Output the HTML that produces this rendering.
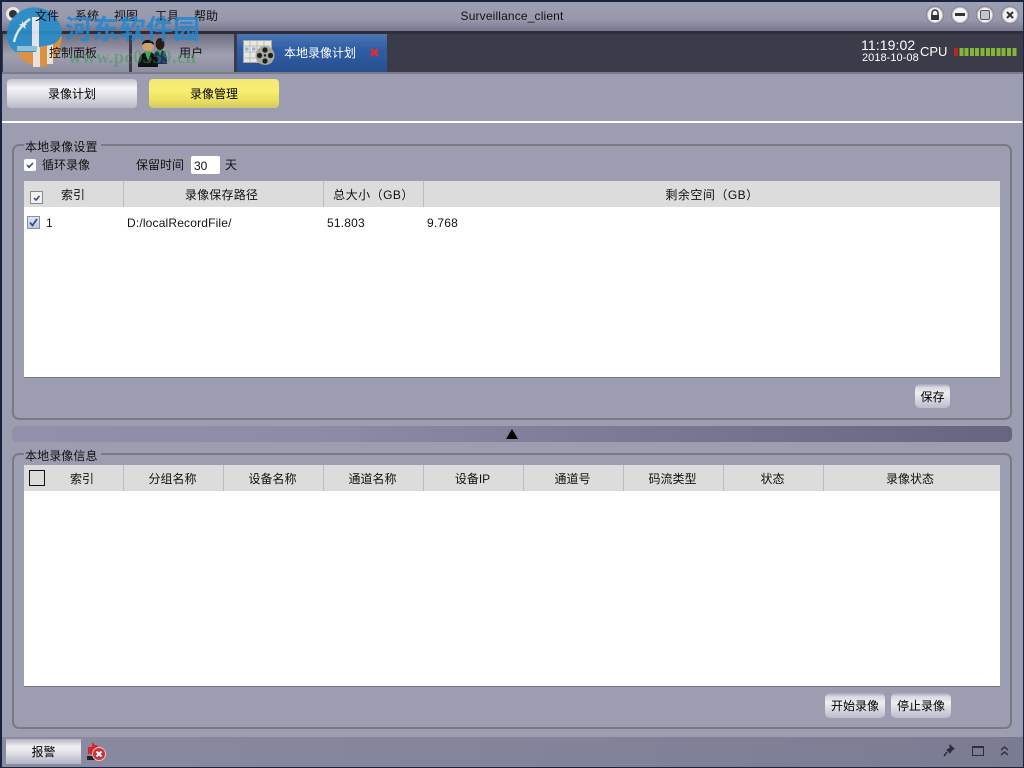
<!DOCTYPE html>
<html><head><meta charset="utf-8">
<style>
html,body{margin:0;padding:0}
body{width:1024px;height:768px;overflow:hidden;position:relative;background:#9d9db1;font-family:"Liberation Sans","Noto Sans CJK SC",sans-serif;font-size:12px;color:#111}
.a{position:absolute}
.t{position:absolute;white-space:nowrap;line-height:16px;height:16px}
.c{text-align:center}
.btn{position:absolute;border-radius:5px;background:linear-gradient(#a4a4b6 0,#d8d8e0 14%,#eeeef2 38%,#bcbccb 100%);text-align:center;color:#000}
.fs{position:absolute;border:2px solid #7a7a84;border-radius:7px;box-sizing:border-box}
.leg{position:absolute;background:#9d9db1;padding:0 3px 0 1px;line-height:16px;height:16px;white-space:nowrap;font-size:12px;letter-spacing:.1px}
.hd{position:absolute;background:#dcdcdc;height:26px}
.sep{position:absolute;width:1px;height:26px;background:#bcbcc0}
.wb{position:absolute;top:6px;width:18px;height:18px;border-radius:50%;background:radial-gradient(#f2f2f5 52%,#666674 72%,#7a7a8a 82%,#a8a8b8 100%)}
</style></head><body>
<!-- outer frame -->
<div class="a" style="left:0;top:0;width:1024px;height:2px;background:#17233f"></div>
<div class="a" style="left:0;top:0;width:2px;height:768px;background:#17233f"></div>
<div class="a" style="right:0;top:0;width:1px;height:768px;background:#17233f"></div>
<!-- title bar -->
<div class="a" style="left:2px;top:2px;width:1021px;height:30px;background:linear-gradient(#9e9eb2 0,#9898ac 60%,#72728a 100%)"></div>
<div class="a" style="left:2px;top:31px;width:1021px;height:3px;background:#2e2e38"></div>
<div class="a" style="left:6px;top:7px;width:14px;height:14px;border-radius:50%;background:#e8e8e8"></div>
<div class="a" style="left:9px;top:10px;width:8px;height:8px;border-radius:50%;background:#333"></div>
<div class="t" style="left:75px;top:8px;color:#111">系统</div>
<div class="t" style="left:114px;top:8px;color:#111">视图</div>
<div class="t" style="left:155px;top:8px;color:#111">工具</div>
<div class="t" style="left:194px;top:8px;color:#111">帮助</div>
<div class="t c" style="left:412px;top:8px;width:200px;color:#111;font-size:12px;letter-spacing:.15px">Surveillance_client</div>
<!-- window buttons -->
<div class="wb" style="left:926px"></div>
<svg class="a" style="left:926px;top:6px" width="18" height="18"><path d="M6 9V7a3 3 0 0 1 6 0v2" fill="none" stroke="#333" stroke-width="1.5"/><rect x="5" y="9" width="8" height="5" fill="#333"/></svg>
<div class="wb" style="left:951px"></div>
<div class="a" style="left:955px;top:13px;width:10px;height:3px;background:#333"></div>
<div class="wb" style="left:976px"></div>
<div class="a" style="left:980px;top:10px;width:10px;height:10px;border:1.5px solid #555;border-radius:2px;box-sizing:border-box;background:#c4c4cc"></div>
<div class="wb" style="left:1001px"></div>
<svg class="a" style="left:1001px;top:6px" width="18" height="18"><path d="M6 6L12 12M12 6L6 12" stroke="#333" stroke-width="2"/></svg>
<!-- tab bar -->
<div class="a" style="left:2px;top:34px;width:1021px;height:38px;background:#3a3a48"></div>
<div class="a" style="left:3px;top:34px;width:126px;height:38px;background:linear-gradient(#6e6e80,#a0a0b2 55%,#8d8da0)"></div>
<div class="a" style="left:132px;top:34px;width:102px;height:38px;background:linear-gradient(#6e6e80,#a0a0b2 55%,#8d8da0)"></div>
<svg class="a" style="left:138px;top:37px" width="30" height="30"><ellipse cx="22" cy="7" rx="4.5" ry="6" fill="#2a1c14"/><path d="M15 27c0-10 2-14 7-14s7 4 7 14z" fill="#1c2f66"/><path d="M20 13l2 6 2-6z" fill="#3fb36a"/><circle cx="10" cy="9" r="5.5" fill="#d2a070"/><path d="M4 8c0-7 12-7 12 0l-3-2H7z" fill="#1d140e"/><path d="M0 30c0-11 4-15 10-15s10 4 10 15z" fill="#101014"/><path d="M7 15l3 9 3-9z" fill="#3fb36a"/></svg>
<div class="t" style="left:179px;top:45px">用户</div>
<div class="a" style="left:237px;top:34px;width:150px;height:38px;background:linear-gradient(#4d76b2,#2f5ea6 40%,#274f90)"></div>
<svg class="a" style="left:243px;top:40px" width="32" height="26"><rect x="0.5" y="0.5" width="28" height="22" fill="#e6e8e2" stroke="#a4a8a0" stroke-width="1"/><path d="M0 6H29M0 12H29M0 18H29M7 0V23M14 0V23M21 0V23" stroke="#b8bcb4" stroke-width="1"/><rect x="2" y="7.5" width="3.5" height="3" fill="#9cacdc"/><rect x="9" y="7.5" width="3.5" height="3" fill="#9cacdc"/><circle cx="22" cy="15.5" r="9.5" fill="#a8a69c"/><circle cx="22" cy="10" r="2.6" fill="#1e1e1e"/><circle cx="22" cy="21" r="2.6" fill="#1e1e1e"/><circle cx="16.5" cy="15.5" r="2.6" fill="#1e1e1e"/><circle cx="27.5" cy="15.5" r="2.6" fill="#1e1e1e"/><circle cx="22" cy="15.5" r="1.2" fill="#1e1e1e"/></svg>
<div class="t" style="left:284px;top:45px;color:#fff">本地录像计划</div>
<svg class="a" style="left:369px;top:47px" width="11" height="11"><path d="M2 2L9 9M9 2L2 9" stroke="#d8303a" stroke-width="2.8"/></svg>
<div class="a" style="left:387px;top:34px;width:636px;height:38px;background:#3b3b49"></div>
<div class="t" style="left:861px;top:37px;color:#fff;font-size:14px;letter-spacing:.1px">11:19:02</div>
<div class="t" style="left:862px;top:50px;color:#fff;font-size:11px;letter-spacing:.05px">2018-10-08</div>
<div class="t" style="left:920px;top:44px;color:#fff;font-size:13px">CPU</div>
<div class="a" style="left:954px;top:48px;width:63px;height:8px;background:repeating-linear-gradient(90deg,#86b53a 0 4px,#3b3b49 4px 5.3px)"></div>
<div class="a" style="left:954px;top:48px;width:4px;height:8px;background:#b02a22"></div>
<div class="a" style="left:2px;top:72px;width:1021px;height:2px;background:#7b7b8c"></div>
<!-- sub tabs -->
<div class="a" style="left:7px;top:79px;width:130px;height:29px;border-radius:4px;background:linear-gradient(#c4c4d0,#f4f4f7 30%,#dedee6 60%,#b9b9c8);"></div>
<div class="t c" style="left:7px;top:86px;width:130px;color:#000">录像计划</div>
<div class="a" style="left:149px;top:79px;width:130px;height:29px;border-radius:4px;background:linear-gradient(#f2e878,#f8ee70 40%,#eadf5e 75%,#cfc66a)"></div>
<div class="t c" style="left:149px;top:86px;width:130px;color:#000">录像管理</div>
<div class="a" style="left:2px;top:121px;width:1020px;height:2px;background:#fff"></div>
<!-- section 1 -->
<div class="fs" style="left:12px;top:144px;width:1000px;height:276px"></div>
<div class="leg" style="left:24px;top:139px">本地录像设置</div>
<div class="a" style="left:24px;top:159px;width:12px;height:12px;background:#fff;border-radius:2px"></div>
<svg class="a" style="left:24px;top:159px" width="12" height="12"><path d="M3 6l2 2.2L9 4" fill="none" stroke="#2a4a88" stroke-width="1.6"/></svg>
<div class="t" style="left:42px;top:157px">循环录像</div>
<div class="t" style="left:136px;top:157px">保留时间</div>
<div class="a" style="left:191px;top:156px;width:29px;height:18px;background:#fff;border-radius:2px"></div>
<div class="t" style="left:194px;top:158px">30</div>
<div class="t" style="left:225px;top:157px">天</div>
<div class="a" style="left:24px;top:181px;width:976px;height:197px;background:#fff;border-bottom:1px solid #77777f;box-sizing:border-box"></div>
<div class="hd" style="left:24px;top:181px;width:976px"></div>
<div class="sep" style="left:123px;top:181px"></div>
<div class="sep" style="left:323px;top:181px"></div>
<div class="sep" style="left:423px;top:181px"></div>
<div class="a" style="left:30px;top:191px;width:13px;height:13px;background:#f2f2f2;border:1px solid #888;box-sizing:border-box"></div>
<svg class="a" style="left:30px;top:191px" width="13" height="13"><path d="M4 7l2 2 3.5-4" fill="none" stroke="#2a4a88" stroke-width="1.5"/></svg>
<div class="t" style="left:61px;top:187px">索引</div>
<div class="t c" style="left:122px;top:187px;width:199px;letter-spacing:.2px">录像保存路径</div>
<div class="t c" style="left:324px;top:187px;width:99px;letter-spacing:.5px">总大小（GB）</div>
<div class="t c" style="left:424px;top:187px;width:576px;letter-spacing:.5px">剩余空间（GB）</div>
<div class="a" style="left:27px;top:216px;width:13px;height:13px;background:linear-gradient(#e0e4f0,#c0c8e0);border:1px solid #8a8fa8;box-sizing:border-box"></div>
<svg class="a" style="left:27px;top:216px" width="13" height="13"><path d="M3 6.5l2.5 3L10 3" fill="none" stroke="#2a4a88" stroke-width="1.7"/></svg>
<div class="t" style="left:46px;top:215px">1</div>
<div class="t" style="left:127px;top:215px;letter-spacing:.17px">D:/localRecordFile/</div>
<div class="t" style="left:327px;top:215px;letter-spacing:.2px">51.803</div>
<div class="t" style="left:427px;top:215px;letter-spacing:.2px">9.768</div>
<div class="btn" style="left:915px;top:384px;width:35px;height:24px;line-height:27px">保存</div>
<!-- splitter -->
<div class="a" style="left:12px;top:426px;width:1000px;height:16px;border-radius:5px;background:linear-gradient(90deg,#9090a8 0,#8c8ca4 30%,#7b7b95 60%,#656582 100%)"></div>
<svg class="a" style="left:506px;top:429px" width="12" height="10"><path d="M6 0L12 10H0z" fill="#000"/></svg>
<!-- section 2 -->
<div class="fs" style="left:12px;top:453px;width:1000px;height:276px"></div>
<div class="leg" style="left:24px;top:448px">本地录像信息</div>
<div class="a" style="left:24px;top:465px;width:976px;height:222px;background:#fff;border-bottom:1px solid #77777f;box-sizing:border-box"></div>
<div class="hd" style="left:24px;top:465px;width:976px"></div>
<div class="sep" style="left:123px;top:465px"></div>
<div class="sep" style="left:223px;top:465px"></div>
<div class="sep" style="left:323px;top:465px"></div>
<div class="sep" style="left:423px;top:465px"></div>
<div class="sep" style="left:523px;top:465px"></div>
<div class="sep" style="left:623px;top:465px"></div>
<div class="sep" style="left:723px;top:465px"></div>
<div class="sep" style="left:823px;top:465px"></div>
<div class="a" style="left:29px;top:470px;width:16px;height:16px;border:1px solid #111;box-sizing:border-box"></div>
<div class="t" style="left:70px;top:471px">索引</div>
<div class="t c" style="left:123px;top:471px;width:99px">分组名称</div>
<div class="t c" style="left:223px;top:471px;width:99px">设备名称</div>
<div class="t c" style="left:323px;top:471px;width:99px">通道名称</div>
<div class="t c" style="left:423px;top:471px;width:99px">设备IP</div>
<div class="t c" style="left:523px;top:471px;width:99px">通道号</div>
<div class="t c" style="left:623px;top:471px;width:99px">码流类型</div>
<div class="t c" style="left:723px;top:471px;width:99px">状态</div>
<div class="t c" style="left:822px;top:471px;width:176px">录像状态</div>
<div class="btn" style="left:825px;top:693px;width:60px;height:25px;line-height:27px">开始录像</div>
<div class="btn" style="left:891px;top:693px;width:60px;height:25px;line-height:27px">停止录像</div>
<!-- status bar -->
<div class="a" style="left:2px;top:737px;width:1021px;height:30px;background:linear-gradient(90deg,#8a8aa0,#83839a 50%,#7b7b92)"></div>
<div class="a" style="left:0;top:767px;width:1024px;height:1px;background:#17233f"></div>
<div class="a" style="left:6px;top:739px;width:75px;height:25px;background:linear-gradient(#b5b5c2,#f0f0f4 30%,#dcdce4 60%,#b5b5c5)"></div>
<div class="t c" style="left:6px;top:744px;width:75px;color:#000">报警</div>
<svg class="a" style="left:86px;top:741px" width="22" height="21"><path d="M2 6h4V1l3 3 3 1v8H2z" fill="#d8262a"/><path d="M1 15h8v4H1z" fill="#222"/><circle cx="13" cy="13" r="6.5" fill="#c9323a" stroke="#e8c8c8" stroke-width="1"/><path d="M10.5 10.5l5 5M15.5 10.5l-5 5" stroke="#fff" stroke-width="2"/></svg>
<svg class="a" style="left:942px;top:744px" width="13" height="14"><path d="M8 1l4 4-2 1-2 3-3-3 3-2z" fill="#2e2e38" stroke="#2e2e38" stroke-width="1"/><path d="M5 8L2 12" stroke="#2e2e38" stroke-width="1.5"/></svg>
<div class="a" style="left:972px;top:746px;width:12px;height:10px;border:1px solid #2e2e38;border-top-width:2px;box-sizing:border-box"></div>
<svg class="a" style="left:999px;top:745px" width="11" height="12"><path d="M2 5l3.5-3L9 5M2 10l3.5-3L9 10" fill="none" stroke="#2e2e38" stroke-width="1.4"/></svg>
<!-- watermark -->
<svg class="a" style="left:0;top:0;opacity:.92" width="70" height="72"><path d="M14 44Q20 66 42 67Q59 64 62 36L14 44z" fill="#e0923a"/><rect x="33" y="46" width="7" height="21" fill="#ece8e0"/><rect x="47" y="44" width="6" height="20" fill="#ece8e0"/><path d="M7 38A27 27 0 1 1 62 32Q60 46 42 46L40 47H36V52H16Q9 48 7 38z" fill="#2a8cc8"/><path d="M14 42Q17 28 30 19" fill="none" stroke="#e8eef2" stroke-width="2.5"/><rect x="32" y="17" width="7" height="30" fill="#e8eef2"/><path d="M22 21l2 3 3 0-2 2 1 3-3-2-3 2 1-3-2-2 3 0z" fill="#e8eef2"/><rect x="17" y="46" width="20" height="5" fill="#8fc6de"/></svg>
<div class="t" style="left:35px;top:8px;color:#111">文件</div>
<div class="t" style="left:49px;top:45px">控制面板</div>
<div class="t" style="left:65px;top:14px;height:32px;line-height:32px;font-size:27px;font-weight:bold;color:#2088d4;opacity:.85;font-family:'Liberation Sans','Noto Sans CJK SC',sans-serif">河东软件园</div>
<div class="t" style="left:68px;top:48px;font-size:19px;line-height:20px;height:20px;font-weight:bold;color:#3f9a50;opacity:.5;font-family:'Liberation Serif',serif;letter-spacing:.2px">www.pc0359.cn</div>
</body></html>
